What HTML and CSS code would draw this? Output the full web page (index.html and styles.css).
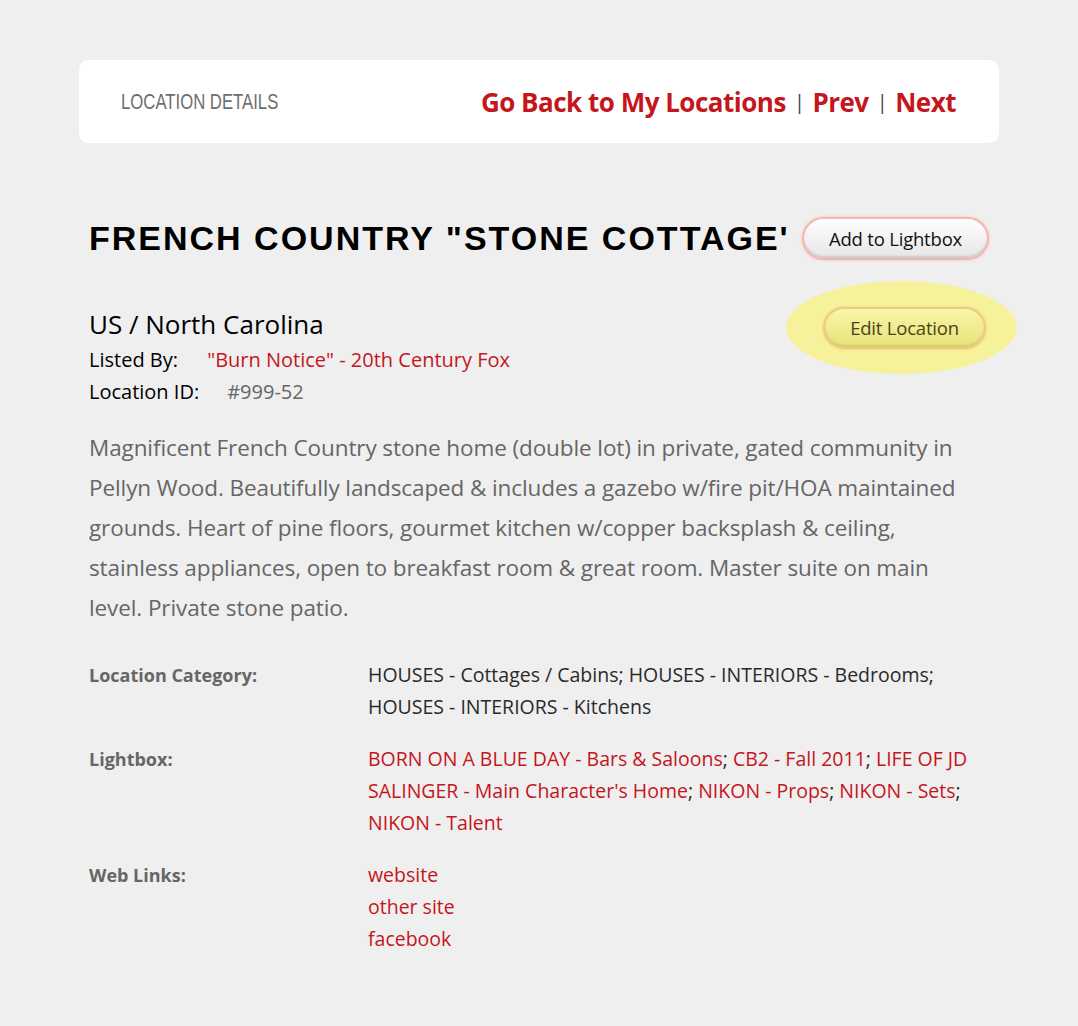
FILE: index.html
```html
<!DOCTYPE html>
<html lang="en">
<head>
    <meta charset="UTF-8">
    <meta name="viewport" content="width=device-width, initial-scale=1.0">
    <title>Location Details</title>
    <link rel="stylesheet" href="styles.css">
</head>
<body>
    <div class="page">
        <header class="topbar">
            <span class="topbar-title">LOCATION DETAILS</span>
            <nav class="topbar-nav">
                <a href="#">Go Back to My Locations</a>
                <span class="sep">|</span>
                <a href="#">Prev</a>
                <span class="sep">|</span>
                <a href="#">Next</a>
            </nav>
        </header>

        <section class="location">
            <div class="title-row">
                <h1>FRENCH COUNTRY "STONE COTTAGE'</h1>
                <button class="pill pill-white">Add to Lightbox</button>
            </div>

            <div class="info-row">
                <div class="info">
                    <h2>US / North Carolina</h2>
                    <p class="meta"><span class="meta-label">Listed By:</span> <a href="#">"Burn Notice" - 20th Century Fox</a></p>
                    <p class="meta"><span class="meta-label id-label">Location ID:</span> <span class="meta-id">#999-52</span></p>
                </div>
                <div class="highlight">
                    <button class="pill pill-yellow">Edit Location</button>
                </div>
            </div>

            <p class="description">Magnificent French Country stone home (double lot) in private, gated community in Pellyn Wood. Beautifully landscaped &amp; includes a gazebo w/fire pit/HOA maintained grounds. Heart of pine floors, gourmet kitchen w/copper backsplash &amp; ceiling, stainless appliances, open to breakfast room &amp; great room. Master suite on main level. Private stone patio.</p>

            <dl class="details">
                <dt>Location Category:</dt>
                <dd>HOUSES - Cottages / Cabins; HOUSES - INTERIORS - Bedrooms; HOUSES - INTERIORS - Kitchens</dd>

                <dt>Lightbox:</dt>
                <dd><a href="#">BORN ON A BLUE DAY - Bars &amp; Saloons</a>; <a href="#">CB2 - Fall 2011</a>; <a href="#">LIFE OF JD SALINGER - Main Character's Home</a>; <a href="#">NIKON - Props</a>; <a href="#">NIKON - Sets</a>; <a href="#">NIKON - Talent</a></dd>

                <dt>Web Links:</dt>
                <dd class="links">
                    <a href="#">website</a>
                    <a href="#">other site</a>
                    <a href="#">facebook</a>
                </dd>
            </dl>
        </section>
    </div>
</body>
</html>
```

FILE: styles.css
```css
body {
    margin: 0;
    background: #efefef;
    font-family: "Open Sans", "Liberation Sans", sans-serif;
    color: #111;
}
a {
    color: #c4161c;
    text-decoration: none;
}
.page {
    width: 920px;
    margin: 0 auto;
    padding: 60px 0 60px;
}
.topbar {
    background: #fff;
    border-radius: 9px;
    height: 83px;
    display: flex;
    align-items: center;
    justify-content: space-between;
    padding: 0 43px 0 42px;
    box-sizing: border-box;
}
.topbar-title {
    font-family: "Liberation Sans", sans-serif;
    font-size: 22px;
    color: #6e6e6e;
    display: inline-block;
    transform: scaleX(0.76);
    transform-origin: left center;
    padding-top: 1px;
}
.topbar-nav {
    font-size: 26px;
    font-weight: 700;
    display: flex;
    align-items: center;
    gap: 8px;
    letter-spacing: -0.5px;
}
.topbar-nav a {
    color: #c4161c;
}
.topbar-nav .sep {
    color: #3a4450;
    font-weight: 400;
    font-size: 20px;
}
.location {
    padding: 0 10px;
}
.title-row {
    display: flex;
    align-items: center;
    margin-top: 74px;
}
.title-row h1 {
    font-family: "Liberation Sans", sans-serif;
    font-weight: 700;
    font-size: 34px;
    letter-spacing: 2px;
    margin: 0;
    white-space: nowrap;
    color: #000;
    flex: 1;
}
.pill {
    font-family: "Open Sans", "Liberation Sans", sans-serif;
    font-size: 18.5px;
    border-radius: 22px;
    cursor: pointer;
    padding: 0;
    letter-spacing: -0.2px;
}
.pill-white {
    width: 187px;
    height: 43px;
    color: #111;
    background: linear-gradient(#fefefe, #e6e6e6);
    border: 2px solid #f3b7b0;
    box-shadow: 0 0 2px 1px #f8d3ce, inset 0 -2px 2px rgba(0,0,0,0.12);
}
.info-row {
    display: flex;
    justify-content: space-between;
    margin-top: 21px;
}
.info {
    padding-top: 28px;
}
.info h2 {
    font-size: 26px;
    font-weight: 400;
    margin: 0 0 5px;
    line-height: 30px;
    color: #000;
}
.meta {
    margin: 0;
    font-size: 20px;
    line-height: 32px;
    color: #000;
}
.meta-label {
    display: inline-block;
    width: 113px;
}
.id-label {
    width: 133px;
}
.meta-id {
    color: #666;
}
.highlight {
    width: 231px;
    height: 93px;
    border-radius: 50%;
    background: #f6f29b;
    display: flex;
    align-items: center;
    justify-content: flex-end;
    margin-right: -28px;
    padding-right: 31px;
    box-sizing: border-box;
}
.pill-yellow {
    width: 163px;
    height: 42px;
    color: #4a4414;
    background: linear-gradient(#f8f6aa, #e8e278);
    border: 2px solid #f1c97e;
    box-shadow: 0 0 2px 1px #f3dc8e, inset 0 -2px 2px rgba(0,0,0,0.1);
}
.description {
    font-size: 22.5px;
    line-height: 40px;
    color: #666;
    margin: 20px 0 0;
    padding-right: 20px;
    letter-spacing: -0.1px;
}
.details {
    display: grid;
    grid-template-columns: 279px 1fr;
    row-gap: 20px;
    margin: 31px 0 0;
    font-size: 19.5px;
    line-height: 32px;
}
.details dt {
    font-weight: 700;
    font-size: 18px;
    color: #666;
}
.details dd {
    margin: 0;
    color: #2a2a2a;
}
.links {
    display: flex;
    flex-direction: column;
}
```
